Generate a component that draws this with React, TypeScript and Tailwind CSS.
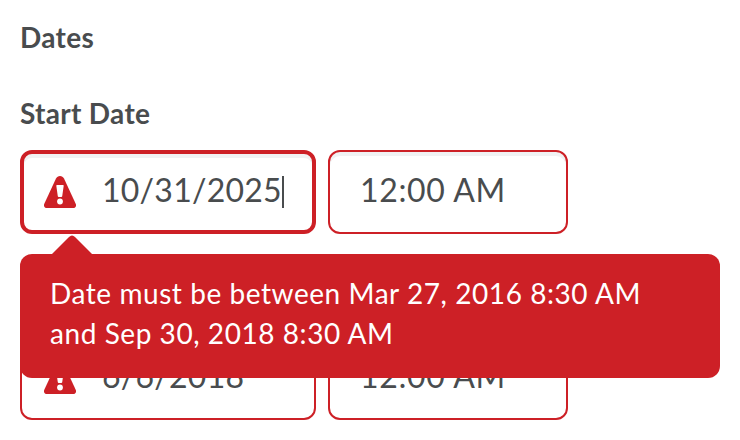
import React from "react";

function WarningIcon() {
  return (
    <svg width="32" height="32" viewBox="0 0 32 32" className="shrink-0" aria-hidden="true">
      <path d="M16 0c1.700 0 3.200 1 4 2.500L31.700 27.700C32.700 29.900 31.400 32 29 32H3C.6 32-.7 29.900.3 27.700L12 2.500C12.800 1 14.300 0 16 0Z" fill="#cd2026" />
      <path d="M13 9h6c.5 0 .8.300.7.800l-1.500 10.400c-.1.500-.4.800-.9.800h-2.600c-.5 0-.8-.3-.9-.8L12.300 9.800c-.1-.5.200-.8.700-.8Z" fill="white" />
      <circle cx="16" cy="25.500" r="2.900" fill="white" />
    </svg>
  );
}

function DateTimeRow({ date, time, focused = false }: { date: string; time: string; focused?: boolean }) {
  return (
    <div className="flex h-[84px] gap-3 text-[32px] leading-[40px] tracking-[0.02em]">
      <div className={`flex w-[296px] items-center rounded-[12px] border-[#cd2026] bg-white shadow-[inset_0_4px_0_#f1f2f3] ${focused ? "border-4 pl-5" : "border-2 pl-[22px]"}`}>
        <WarningIcon />
        <span className="-mt-1 ml-[26px] tracking-[0.25px] whitespace-nowrap">{date}</span>
        {focused && <span className="h-8 w-[2px] bg-[#494c4e]" />}
      </div>
      <div className="flex w-[240px] items-center rounded-[12px] border-2 border-[#cd2026] bg-white pl-[30px] shadow-[inset_0_4px_0_#f1f2f3]">
        <span className="-mt-1 whitespace-nowrap">{time}</span>
      </div>
    </div>
  );
}

export default function App() {
  return (
    <main className="relative h-[440px] w-[740px] overflow-hidden bg-white px-5 pt-[17px] font-['Lato',sans-serif] text-[#494c4e]">
      <h2 className="text-[28px] leading-[40px] font-bold tracking-[0.3px]">Dates</h2>
      <h3 className="mt-9 mb-[17px] text-[28px] leading-[40px] font-bold tracking-[0.3px]">Start Date</h3>
      <DateTimeRow date="10/31/2025" time="12:00 AM" focused />
      <div className="mt-[102px]"><DateTimeRow date="6/6/2018" time="12:00 AM" /></div>
      <div role="tooltip" className="absolute top-[254px] left-5 h-[124px] w-[700px] rounded-[12px] bg-[#cd2026] px-[30px] pt-[19px] text-[28px] leading-[40px] tracking-[0.56px] text-white">
        <svg className="absolute -top-[20px] left-[30px]" width="44" height="22" viewBox="0 0 44 22" aria-hidden="true"><path d="M0 22 19 3q3-3 6 0l19 19Z" fill="#cd2026" /></svg>
        Date must be between Mar 27, 2016 8:30 AM<br />and Sep 30, 2018 8:30 AM
      </div>
    </main>
  );
}
